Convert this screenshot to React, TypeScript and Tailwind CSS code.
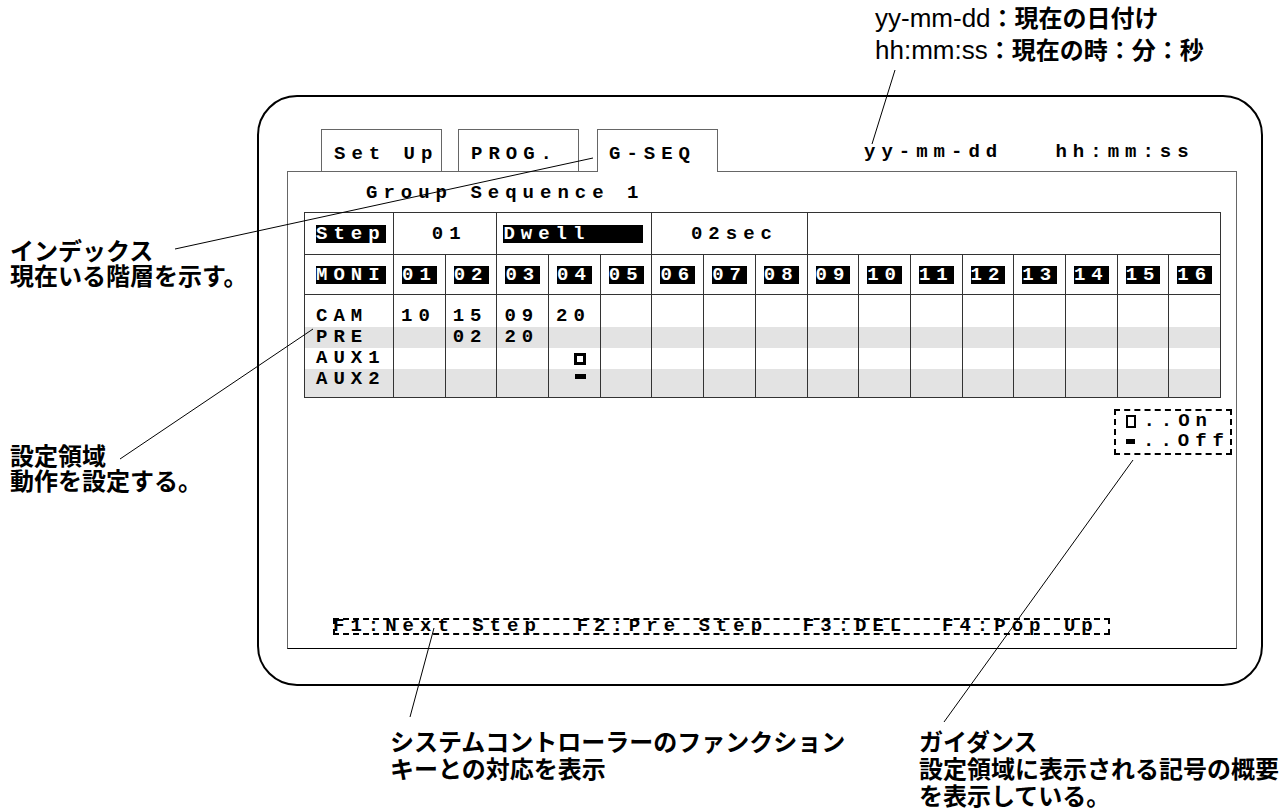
import React from 'react';

const mono = "font-['Liberation_Mono',monospace] font-bold text-[19px] leading-[18px] tracking-[6px] whitespace-pre";
const jp = "font-['Noto_Sans_CJK_JP',sans-serif] font-bold";
const inv = 'bg-black text-white';

const moni = ['01', '02', '03', '04', '05', '06', '07', '08', '09', '10', '11', '12', '13', '14', '15', '16'];

const rows = [
  { label: 'CAM', cells: ['10', '15', '09', '20'], row: 'h-[32px]', cell: 'items-end' },
  { label: 'PRE', cells: ['', '02', '20'], row: 'h-[21px] bg-[#e3e3e3]', cell: 'items-center' },
  { label: 'AUX1', cells: ['', '', '', 'on'], row: 'h-[21px]', cell: 'items-center' },
  { label: 'AUX2', cells: ['', '', '', 'off'], row: 'h-[28px] bg-[#e3e3e3]', cell: 'items-start' },
];

// leader lines of the callouts
const leaders = [
  [895, 70, 872, 144],
  [175, 249, 593, 158],
  [120, 459, 313, 329],
  [434, 628, 410, 717],
  [1133, 460, 944, 722],
];

function Tab({ label, active }: { label: string; active?: boolean }) {
  return (
    <div
      className={
        active
          ? 'relative z-10 -mb-px h-[43px] w-[121px] border border-b-0 border-[#666] bg-white pl-[11px] pt-[11px]'
          : 'h-[42px] w-[121px] border border-b-0 border-[#666] pl-[12px] pt-[11px]'
      }
    >
      <span className={mono}>{label}</span>
    </div>
  );
}

function DataCell({ v, align }: { v: string; align: string }) {
  if (v === 'on')
    return (
      <div className="flex items-center border-l border-[#333] pl-[25px]">
        <span className="block h-[12px] w-[12px] border-[3px] border-black" />
      </div>
    );
  if (v === 'off')
    return (
      <div className="flex items-start border-l border-[#333] pl-[26px] pt-[5px]">
        <span className="block h-[5px] w-[11px] bg-black" />
      </div>
    );
  return <div className={`flex border-l border-[#333] pl-[7px] ${align}`}>{v}</div>;
}

function Table() {
  return (
    <div className="ml-[16px] mt-[10px] w-[917px] border border-[#333]">
      <div className={`grid h-[42px] grid-cols-[88px_repeat(16,minmax(0,1fr))] border-b border-[#333] ${mono}`}>
        <div className="flex items-center pl-[11px]">
          <span className={inv}>Step</span>
        </div>
        <div className="col-span-2 flex items-center justify-center border-l border-[#333] pl-[8px]">01</div>
        <div className="col-span-3 flex items-center border-l border-[#333] pl-[6px]">
          <span className={inv}>{'Dwell   '}</span>
        </div>
        <div className="col-span-3 flex items-center justify-center border-l border-[#333] pl-[10px]">02sec</div>
        <div className="col-span-8 border-l border-[#333]" />
      </div>

      <div className={`grid h-[40px] grid-cols-[88px_repeat(16,minmax(0,1fr))] border-b border-[#333] ${mono}`}>
        <div className="flex items-center pl-[11px]">
          <span className={inv}>MONI</span>
        </div>
        {moni.map((m) => (
          <div key={m} className="flex items-center border-l border-[#333] pl-[8px]">
            <span className={inv}>{m}</span>
          </div>
        ))}
      </div>

      {rows.map((r) => (
        <div
          key={r.label}
          className={`grid grid-cols-[88px_repeat(16,minmax(0,1fr))] ${r.row} ${mono} leading-[21px]`}
        >
          <div className={`flex pl-[11px] ${r.cell}`}>{r.label}</div>
          {moni.map((m, i) => (
            <DataCell key={m} v={r.cells[i] ?? ''} align={r.cell} />
          ))}
        </div>
      ))}
    </div>
  );
}

function Screen() {
  return (
    <div className="flex h-[591px] w-[1006px] shrink-0 flex-col rounded-[40px] border-2 border-black pl-[28px] pt-[32px]">
      <div className="flex items-start pl-[34px]">
        <div className="mr-[16px]">
          <Tab label="Set Up" />
        </div>
        <div className="mr-[18px]">
          <Tab label="PROG." />
        </div>
        <Tab label="G-SEQ" active />
        <div className={`ml-[146px] mt-[14px] ${mono}`}>{'yy-mm-dd   hh:mm:ss'}</div>
      </div>

      <div className="flex h-[478px] w-[950px] flex-col border border-[#666] border-b-black">
        <div className={`ml-[78px] mt-[12px] ${mono}`}>Group Sequence 1</div>
        <Table />

        <div className="ml-auto mr-[4px] mt-[11px] flex h-[46px] w-[118px] flex-col border-2 border-dashed border-black pl-[10px]">
          <div className="flex h-[20px] items-center">
            <span className="flex w-[17.4px]">
              <span className="block h-[13px] w-[10px] border-[2.5px] border-black" />
            </span>
            <span className={mono}>..On</span>
          </div>
          <div className="flex h-[20px] items-center">
            <span className="flex w-[17.4px]">
              <span className="block h-[5px] w-[9px] bg-black" />
            </span>
            <span className={mono}>..Off</span>
          </div>
        </div>

        <div className="mb-[13px] ml-[45px] mt-auto h-[17px] w-[777px] border-2 border-dashed border-black">
          <div className={`-ml-[2px] -mt-[3px] ${mono} tracking-[5.8px]`}>
            {'F1:Next Step  F2:Pre Step  F3:DEL  F4:Pop Up'}
          </div>
        </div>
      </div>
    </div>
  );
}

export default function App() {
  return (
    <div className="relative flex h-[812px] w-[1288px] flex-col overflow-hidden bg-white text-black">
      <div className="h-[95px] shrink-0 whitespace-nowrap pl-[875px] pt-[3px] leading-[28px]">
        <div>
          <span className="font-['Liberation_Sans',sans-serif] text-[26px]">yy-mm-dd</span>
          <span className={`${jp} text-[24px]`}>：現在の日付け</span>
        </div>
        <div>
          <span className="font-['Liberation_Sans',sans-serif] text-[26px]">hh:mm:ss</span>
          <span className={`${jp} text-[24px]`}>：現在の時：分：秒</span>
        </div>
      </div>

      <div className="flex">
        <div className={`w-[257px] shrink-0 whitespace-nowrap pl-[10px] text-[24px] leading-[25px] ${jp}`}>
          <div className="mt-[142px]">
            <div>インデックス</div>
            <div>現在いる階層を示す。</div>
          </div>
          <div className="mt-[155px]">
            <div>設定領域</div>
            <div>動作を設定する。</div>
          </div>
        </div>
        <Screen />
      </div>

      <div className={`mt-[41px] flex whitespace-nowrap pl-[390px] text-[24px] leading-[27px] ${jp}`}>
        <div className="w-[529px] shrink-0">
          <div>システムコントローラーのファンクション</div>
          <div>キーとの対応を表示</div>
        </div>
        <div>
          <div>ガイダンス</div>
          <div>設定領域に表示される記号の概要</div>
          <div>を表示している。</div>
        </div>
      </div>

      <svg className="pointer-events-none absolute inset-0" width="1288" height="812">
        {leaders.map(([x1, y1, x2, y2], i) => (
          <line key={i} x1={x1} y1={y1} x2={x2} y2={y2} stroke="black" strokeWidth="1" />
        ))}
      </svg>
    </div>
  );
}
